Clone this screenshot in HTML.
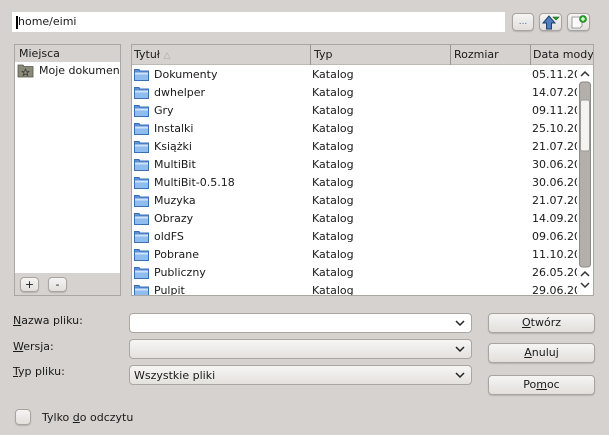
<!DOCTYPE html><html><head><style>
*{box-sizing:border-box;margin:0;padding:0}
body{width:609px;height:435px;background:#d6d2cf;font-family:"DejaVu Sans","Liberation Sans",sans-serif;font-size:11px;color:#1a1a1a;position:relative;overflow:hidden}
.a{position:absolute}
.btn{position:absolute;border:1px solid #a8a49f;border-radius:4px;background:linear-gradient(#f6f5f4,#e2dfdc);box-shadow:0 1px 1px rgba(0,0,0,.15);text-align:center}
.combo{position:absolute;left:129px;width:343px;height:20px;border:1px solid #aaa6a1;border-radius:4px;background:linear-gradient(#f7f6f5,#e4e1de)}
.combo .ar{position:absolute;right:5px;top:3px;width:12px;height:12px}
.row{position:absolute;left:0;height:18px;width:446px}
.row span{position:absolute;top:2px}
.fi{position:absolute;left:2px;top:2px;width:15px;height:13px}
u{text-decoration:underline}
</style></head><body>
<div class="a" style="left:12px;top:12px;width:493px;height:20px;background:#fff"></div>
<div class="a" style="left:16px;top:16px;width:2px;height:13px;background:#000"></div>
<div class="a" style="left:18px;top:15px">home/eimi</div>
<div class="btn" style="left:512px;top:13px;width:22px;height:18px;font-size:9px;line-height:17px;color:#4a6a9a">...</div>
<div class="btn" style="left:539px;top:13px;width:23px;height:18px"><svg width="21" height="16" viewBox="0 0 21 16"><path d="M9 2 L3 9 H6.5 V15 H11.5 V9 H15 Z" fill="#4f7fbf" stroke="#1f3f6f" stroke-width="1"/><path d="M13 3 H19 L16 6 Z" fill="#22aa22" stroke="#115511" stroke-width=".6"/></svg></div>
<div class="btn" style="left:567px;top:13px;width:23px;height:18px"><svg width="21" height="16" viewBox="0 0 21 16"><path d="M4 3 H14 V12 L12 14 H4 Z" fill="#fafafa" stroke="#888" stroke-width=".8"/><circle cx="15" cy="5" r="3.5" fill="#2a2" stroke="#161" stroke-width=".6"/><path d="M15 3 V7 M13 5 H17" stroke="#fff" stroke-width="1.2"/></svg></div>

<div class="a" style="left:14px;top:44px;width:107px;height:252px;border:1px solid #aaa6a1;background:#d6d2cf"></div>
<div class="a" style="left:19px;top:47px">Miejsca</div>
<div class="a" style="left:15px;top:62px;width:105px;height:211px;background:#fff"></div>
<svg class="a" style="left:17px;top:63px" width="17" height="15" viewBox="0 0 17 15"><path d="M1 2 H6 L7 3.5 H16 V14 H1 Z" fill="#8a8a78" stroke="#55554a" stroke-width=".8"/><path d="M8.5 6 L9.5 8.3 L12 8.4 L10 10 L10.7 12.4 L8.5 11 L6.3 12.4 L7 10 L5 8.4 L7.5 8.3 Z" fill="none" stroke="#333" stroke-width=".7"/></svg>
<div class="a" style="left:39px;top:64px;width:81px;overflow:hidden;white-space:nowrap">Moje dokumenty</div>
<div class="btn" style="left:20px;top:277px;width:19px;height:15px;line-height:13px">+</div>
<div class="btn" style="left:48px;top:277px;width:19px;height:15px;line-height:13px">-</div>

<div class="a" style="left:131px;top:44px;width:463px;height:252px;border:1px solid #aaa6a1;background:#fff;overflow:hidden">
 <div class="a" style="left:0;top:0;width:461px;height:20px;background:#d6d2cf;border-bottom:1px solid #bdb9b5"></div>
 <div class="a" style="left:2px;top:3px">Tytuł <span style="color:#aaa;font-size:9px">△</span></div>
 <div class="a" style="left:178px;top:0;width:1px;height:20px;background:#9a968f"></div>
 <div class="a" style="left:182px;top:3px">Typ</div>
 <div class="a" style="left:318px;top:0;width:1px;height:20px;background:#9a968f"></div>
 <div class="a" style="left:322px;top:3px">Rozmiar</div>
 <div class="a" style="left:398px;top:0;width:1px;height:20px;background:#9a968f"></div>
 <div class="a" style="left:401px;top:3px;white-space:nowrap">Data modyfikacji</div>
 <div id="rows"></div>
 <div class="a" style="left:445px;top:20px;width:16px;height:232px;background:#fff"></div>
 <svg class="a" style="left:446px;top:23px" width="14" height="228" viewBox="0 0 14 228"><path d="M3 8 L7 4 L11 8" fill="none" stroke="#333" stroke-width="1.5"/><rect x="1.5" y="14" width="11" height="185" rx="3" fill="#b3afaa" stroke="#8e8a85"/><rect x="2.5" y="32" width="9" height="51" rx="2" fill="#f4f3f2" stroke="#9d9994"/><path d="M3 208 L7 204 L11 208" fill="none" stroke="#333" stroke-width="1.5"/><path d="M3 215 L7 219 L11 215" fill="none" stroke="#333" stroke-width="1.5"/></svg>
</div>

<div class="a" style="left:13px;top:314px"><u>N</u>azwa pliku:</div>
<div class="a" style="left:13px;top:340px"><u>W</u>ersja:</div>
<div class="a" style="left:13px;top:365px"><u>T</u>yp pliku:</div>
<div class="combo" style="top:313px;background:#fff"><svg class="ar" viewBox="0 0 12 12"><path d="M2 4 L6 8 L10 4" fill="none" stroke="#222" stroke-width="1.5"/></svg></div>
<div class="combo" style="top:339px"><svg class="ar" viewBox="0 0 12 12"><path d="M2 4 L6 8 L10 4" fill="none" stroke="#222" stroke-width="1.5"/></svg></div>
<div class="combo" style="top:365px"><span class="a" style="left:4px;top:3px">Wszystkie pliki</span><svg class="ar" viewBox="0 0 12 12"><path d="M2 4 L6 8 L10 4" fill="none" stroke="#222" stroke-width="1.5"/></svg></div>
<div class="btn" style="left:488px;top:313px;width:107px;height:20px;line-height:18px"><u>O</u>twórz</div>
<div class="btn" style="left:488px;top:343px;width:107px;height:20px;line-height:18px"><u>A</u>nuluj</div>
<div class="btn" style="left:488px;top:375px;width:107px;height:20px;line-height:18px">Po<u>m</u>oc</div>
<div class="btn" style="left:15px;top:409px;width:16px;height:16px"></div>
<div class="a" style="left:42px;top:411px">Tylko <u>d</u>o odczytu</div>
<script>
var n=["Dokumenty","dwhelper","Gry","Instalki","Książki","MultiBit","MultiBit-0.5.18","Muzyka","Obrazy","oldFS","Pobrane","Publiczny","Pulpit"];
var d=["05.11.20","14.07.20","09.11.20","25.10.20","21.07.20","30.06.20","30.06.20","21.07.20","14.09.20","09.06.20","11.10.20","26.05.20","29.06.20"];
var h="";for(var i=0;i<n.length;i++){h+='<div class="row" style="top:'+(21+i*18)+'px"><svg class="fi" viewBox="0 0 15 13"><path d="M0.5 1.5 H5 L6 3 H14.5 V12.5 H0.5 Z" fill="#5b8fd6" stroke="#3a6fb5"/><rect x="1" y="4.5" width="13" height="7.5" fill="#8fbdf0"/><rect x="1" y="4.5" width="13" height="2" fill="#cde3fa"/></svg><span style="left:22px">'+n[i]+'</span><span style="left:180px">Katalog</span><span style="left:400px">'+d[i]+'</span></div>';}
document.getElementById("rows").innerHTML=h;
</script>
</body></html>
